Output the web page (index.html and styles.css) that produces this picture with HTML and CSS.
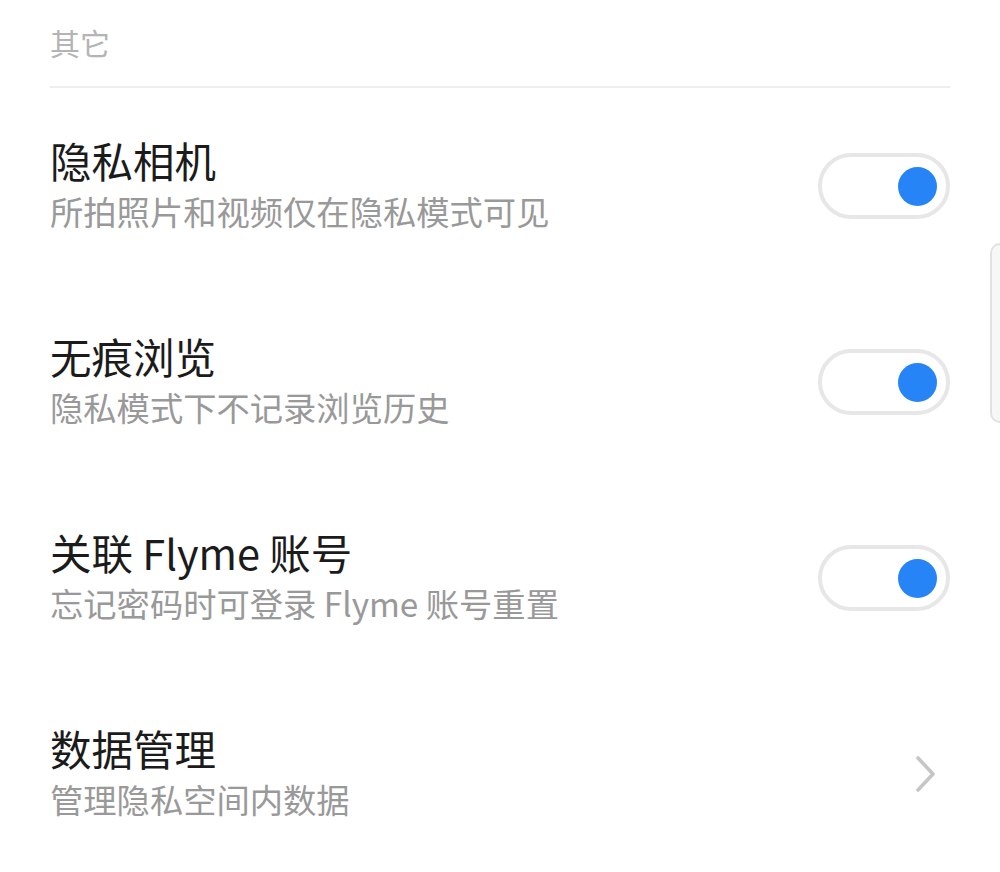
FILE: index.html
```html
<!DOCTYPE html>
<html lang="zh-CN">

<head>
    <meta charset="UTF-8">
    <meta name="viewport" content="width=device-width, initial-scale=1.0">
    <title>隐私空间设置</title>
    <link rel="stylesheet" href="styles.css">
</head>

<body>
    <div class="page">
        <div class="section-title">其它</div>
        <div class="list">
            <div class="item">
                <div class="text">
                    <p class="name">隐私相机</p>
                    <p class="desc">所拍照片和视频仅在隐私模式可见</p>
                </div>
                <div class="switch on"><span class="knob"></span></div>
            </div>
            <div class="item">
                <div class="text">
                    <p class="name">无痕浏览</p>
                    <p class="desc">隐私模式下不记录浏览历史</p>
                </div>
                <div class="switch on"><span class="knob"></span></div>
            </div>
            <div class="item">
                <div class="text">
                    <p class="name">关联 Flyme 账号</p>
                    <p class="desc">忘记密码时可登录 Flyme 账号重置</p>
                </div>
                <div class="switch on"><span class="knob"></span></div>
            </div>
            <div class="item">
                <div class="text">
                    <p class="name">数据管理</p>
                    <p class="desc">管理隐私空间内数据</p>
                </div>
                <svg class="arrow" width="24" height="40" viewBox="0 0 24 40">
                    <path d="M4 4 L19 20 L4 36" fill="none" stroke="#c6c6c6" stroke-width="3.6" stroke-linecap="round" stroke-linejoin="round"/>
                </svg>
            </div>
        </div>
        <div class="scroll-handle"></div>
    </div>
</body>

</html>
```

FILE: styles.css
```css
body {
    margin: 0;
    background-color: #ffffff;
    font-family: "Noto Sans CJK SC", "Noto Sans", sans-serif;
}

.page {
    position: relative;
    width: 1000px;
    height: 872px;
    overflow: hidden;
}

.section-title {
    margin: 0 50px;
    height: 88px;
    display: flex;
    align-items: center;
    font-size: 30px;
    color: #b4b4b4;
    border-bottom: 2px solid #eeeeee;
    box-sizing: border-box;
    padding-bottom: 2px;
}

.list {
    padding: 0 50px;
}

.item {
    height: 196px;
    display: flex;
    align-items: center;
    justify-content: space-between;
}

.text {
    margin-bottom: 6px;
}

.text p {
    margin: 0;
}

.name {
    font-size: 41.5px;
    line-height: 52px;
    color: #1b1b1b;
}

.desc {
    margin-top: 3px !important;
    font-size: 33.3px;
    line-height: 44px;
    color: #999999;
}

.switch {
    width: 132px;
    height: 66px;
    box-sizing: border-box;
    border: 4px solid #e7e7e7;
    border-radius: 33px;
    display: flex;
    align-items: center;
    justify-content: flex-end;
    padding-right: 9px;
}

.knob {
    width: 39px;
    height: 39px;
    border-radius: 50%;
    background-color: #2684f7;
}

.arrow {
    margin-right: 12px;
}

.scroll-handle {
    position: absolute;
    right: -12px;
    top: 243px;
    width: 18px;
    height: 176px;
    border: 2px solid #e2e2e2;
    border-radius: 10px;
    background-color: #f7f7f7;
}
```
